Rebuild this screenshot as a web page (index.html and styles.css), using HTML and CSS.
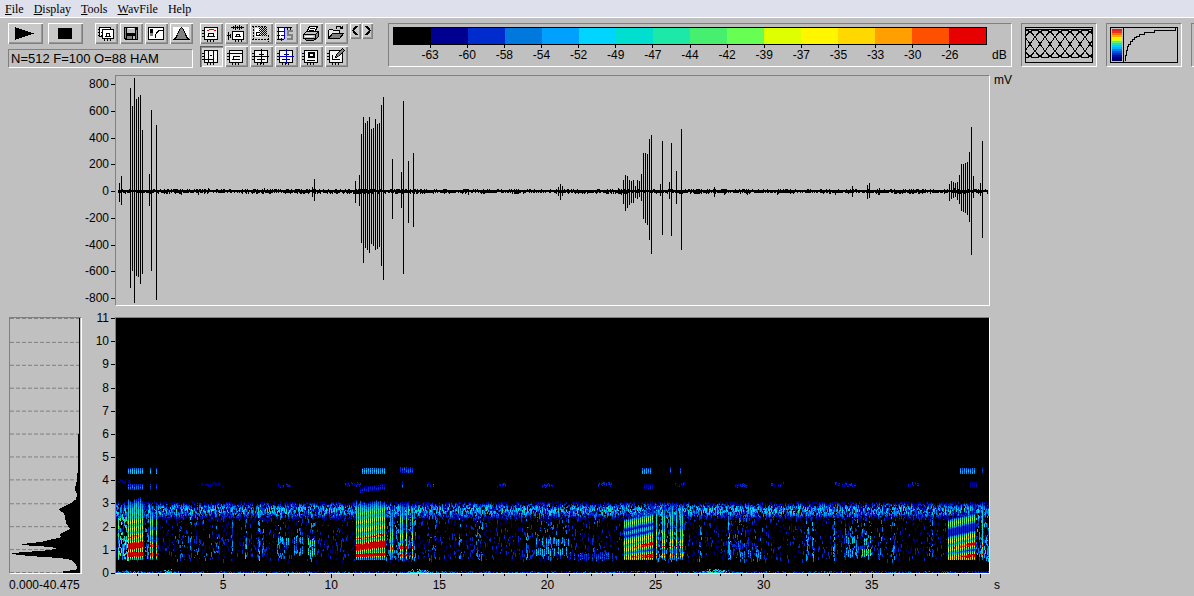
FILE: index.html
```html
<!DOCTYPE html>
<html lang="en">
<head>
<meta charset="utf-8">
<title>Spectrogram</title>
<link rel="stylesheet" href="styles.css">
</head>
<body>
<svg class="defs" aria-hidden="true">
  <defs>
    <symbol id="frame" viewBox="0 0 23 21">
      <path fill="#f4f4f4" d="M4 4h14v13H4z"/>
      <path fill="none" stroke="#000" d="M4.500 4.500h13v12h-13zM2 7.500h2M2 10.500h2M2 13.500h2M7.500 17v2M10.500 17v2M13.500 17v2"/>
    </symbol>
    <pattern id="check" width="2" height="2" patternUnits="userSpaceOnUse">
      <path d="M0 0h1v1H0zM1 1h1v1H1z"/>
    </pattern>
  </defs>
</svg>

<nav class="menu" aria-label="Main menu">
  <button type="button"><u>F</u>ile</button>
  <button type="button"><u>D</u>isplay</button>
  <button type="button"><u>T</u>ools</button>
  <button type="button"><u>W</u>avFile</button>
  <button type="button">Help</button>
</nav>

<header class="toolbar">
  <div class="transport">
    <div class="row">
      <button class="btn wide" type="button" aria-label="Play"><svg viewBox="0 0 35 21"><path d="M7 4l19 6.500L7 17z"/></svg></button>
      <button class="btn wide" type="button" aria-label="Stop"><svg viewBox="0 0 35 21"><path d="M10 5h14v11H10z"/></svg></button>
      <div class="row tight">
        <button class="btn" type="button" aria-label="Copy"><svg viewBox="0 0 23 21"><path fill="#fff" stroke="#000" d="M4.500 4.500h11v9h-11z"/><path stroke="#000" d="M3 6.500h2M3 9.500h2M3 12.500h2"/><path fill="#fff" stroke="#000" d="M7.500 6.500h11v9h-11z"/><path fill="none" stroke="#000" d="M10 13.500h6M11.500 13v-3h3v3M9.500 16v2M12.500 16v2M15.500 16v2M6 9.500h2M6 12.500h2"/></svg></button>
        <button class="btn" type="button" aria-label="Save"><svg viewBox="0 0 23 21"><path d="M4 4h14v13H5l-1-1z"/><path fill="#c0c0c0" d="M7 5h8v5H7zM13 13h2v3h-2z"/><path fill="#808080" d="M5 5h1v10H5zM16 7h1v9h-1zM7 13h5v3H7z"/><path fill="#fff" d="M8 5h6v1H8z"/></svg></button>
        <button class="btn" type="button" aria-label="Transfer curve"><svg viewBox="0 0 23 21"><path fill="#fff" stroke="#000" d="M3.500 4.500h15v12h-15z"/><path d="M5 6h3v4H5z"/><path fill="#808080" d="M5 10h3v3H5z"/><path fill="none" stroke="#000" d="M10.500 15v-3l1-2 2-2 4-1"/></svg></button>
        <button class="btn" type="button" aria-label="Window shape"><svg viewBox="0 0 23 21"><path fill="#fff" d="M3 4h16v13H3z"/><path fill="#808080" stroke="#000" d="M3.500 16.500l2-1 2-4 2-5 2-2 2 2 2 5 2 4 2 1z"/></svg></button>
      </div>
    </div>
    <output class="status">N=512 F=100 O=88 HAM</output>
  </div>

  <div class="tools">
    <button class="btn" type="button" aria-label="Show marker"><svg viewBox="0 0 23 21"><use href="#frame"/><path fill="none" stroke="#e00000" d="M7 7.500h2M9 6.500h5M14 7.500h2"/><path fill="none" stroke="#000" d="M7 13.500h8M8.500 13v-3h5v3"/></svg></button>
    <button class="btn" type="button" aria-label="Envelope"><svg viewBox="0 0 23 21"><path fill="#fff" stroke="#000" d="M7.500 8.500h11v8h-11z"/><path fill="none" stroke="#000" d="M6 4.500h13M8.500 3v3M10.500 2v5M12.500 3v3M14.500 2v5M16.500 3v3M3.500 9v8M2 12.500h4M5.500 11v4M10 13.500h6M11.500 13v-2h3v2M10.500 17v2M13.500 17v2M16.500 17v2"/></svg></button>
    <button class="btn" type="button" aria-label="Select area"><svg viewBox="0 0 23 21"><path fill="#fff" d="M5 5h6v9H5z"/><path fill="none" stroke="#000" stroke-dasharray="2 1" d="M2 3.500h15M3.500 3v13M2 16.500h18M18.500 12v7"/><path fill="none" stroke="#000" d="M6 12.500h4M6.500 12v-3h3"/><path fill="url(#check)" d="M9 4h8v9H9z"/></svg></button>
    <button class="btn" type="button" aria-label="Spectrum"><svg viewBox="0 0 23 21"><path fill="#fff" d="M4 5h5v10H4z"/><path fill="none" stroke="#000" d="M2 4.500h15M3.500 4v12M2 8.500h3M2 12.500h3M2 16.500h7M6.500 15v3M12.500 4v3M15.500 4v3"/><path stroke="#0000e0" d="M9.500 4v12M5 8.500h4M6 12.500h3"/><path fill="none" stroke="#808080" stroke-width="2" d="M18 8h-5v4h4v4h-5"/></svg></button>
    <button class="btn" type="button" aria-label="Print"><svg viewBox="0 0 23 21"><path fill="#fff" stroke="#000" d="M6.500 9.500l3-6h8l-3 6z"/><path stroke="#000" d="M10 5.500h5M9 7.500h5"/><path fill="#c0c0c0" stroke="#000" d="M3.500 11.500l3-3h12l-3 3zM3.500 11.500h12v4h-12z"/><path fill="#808080" stroke="#000" d="M15.500 11.500l3-3v5l-3 3zM4.500 15.500h11l-2 2h-7z"/><path stroke="#fff" d="M5 13.500h8"/></svg></button>
    <button class="btn" type="button" aria-label="Open"><svg viewBox="0 0 23 21"><path fill="#e8e8e8" stroke="#000" d="M3.500 15.500v-8l1-1h3l1 1h6v3"/><path fill="#808080" stroke="#000" d="M3.500 15.500l4-5h11l-4 5z"/><path fill="none" stroke="#000" d="M11 5.500l1-2h3l2 2M17.500 3v3M15 5.500h3"/></svg></button>
    <button class="btn pressed" type="button" aria-label="Time cursors"><svg viewBox="0 0 23 21"><use href="#frame"/><path fill="none" stroke="#000" d="M8.500 4v13M13.500 4v13M9 13.500h4M5 13.500h3M10 9.500h2"/></svg></button>
    <button class="btn" type="button" aria-label="Frequency cursors"><svg viewBox="0 0 23 21"><use href="#frame"/><path fill="none" stroke="#000" d="M4 7.500h14M9 10.500h6M7 13.500h8M8.500 10v4"/></svg></button>
    <button class="btn" type="button" aria-label="Crosshair"><svg viewBox="0 0 23 21"><use href="#frame"/><path fill="none" stroke="#000" d="M11.500 3v15M4 10.500h15M7 13.500h8M9 8.500h5"/></svg></button>
    <button class="btn" type="button" aria-label="Second crosshair"><svg viewBox="0 0 23 21"><use href="#frame"/><path stroke="#000" d="M7 13.500h8M9 8.500h5"/><path fill="none" stroke="#0000d0" d="M11.500 3v15M4 10.500h15"/></svg></button>
    <button class="btn" type="button" aria-label="Box cursor"><svg viewBox="0 0 23 21"><use href="#frame"/><path fill="#fff" stroke="#000" stroke-width="2" d="M9 7h5v4H9z"/><path stroke="#000" d="M7 14.500h8"/></svg></button>
    <button class="btn" type="button" aria-label="Draw"><svg viewBox="0 0 23 21"><use href="#frame"/><path fill="none" stroke="#000" d="M7 13.500h8M7.500 9v4"/><path fill="#808080" stroke="#000" d="M10.500 11.500l1-3 6-6 2 2-6 6z"/></svg></button>
  </div>
  <div class="scroll">
    <button class="btn small" type="button" aria-label="Scroll left"><svg viewBox="0 0 11 16"><path fill="none" stroke="#000" stroke-width="2" d="M7 3L3 7.500 7 12"/></svg></button>
    <button class="btn small" type="button" aria-label="Scroll right"><svg viewBox="0 0 11 16"><path fill="none" stroke="#000" stroke-width="2" d="M4 3l4 4.500L4 12"/></svg></button>
  </div>

  <section class="sunken scale" aria-label="Level scale">
    <div class="bar" id="bar"></div>
    <div class="levels" id="levels"></div>
    <span class="unit-db">dB</span>
  </section>
  <section class="sunken mini"><svg id="lattice" viewBox="0 0 68 36" preserveAspectRatio="none"></svg></section>
  <section class="sunken mini"><svg id="curve" viewBox="0 0 68 36" preserveAspectRatio="none"></svg></section>
  <section class="sunken cut"></section>
</header>

<main class="plots">
  <div class="axis axis-mv" id="axis-mv"></div>
  <svg class="sunken wave" id="wave" viewBox="116 76 873 229" preserveAspectRatio="none" role="img" aria-label="Waveform"></svg>
  <span class="unit-mv">mV</span>

  <svg class="sunken profile" id="profile" viewBox="10 318 71 256" preserveAspectRatio="none" role="img" aria-label="Mean spectrum"></svg>
  <div class="axis axis-khz" id="axis-khz"></div>
  <canvas class="sunken sono" id="sono" width="873" height="255"></canvas>

  <span class="range">0.000-40.475</span>
  <div class="time">
    <svg id="ticks" viewBox="0 0 873 4" preserveAspectRatio="none"></svg>
    <div class="seconds" id="seconds"></div>
  </div>
  <span class="unit-s">s</span>
</main>
<script src="app.js"></script>
</body>
</html>
```
FILE: styles.css
```css
* { box-sizing: border-box; }

body {
  margin: 0;
  min-height: 100vh;
  background: #c0c0c0;
  color: #000;
  font: 12px/15px "Liberation Sans", Arial, sans-serif;
}

button { padding: 0; border: 0; background: none; color: inherit; font: inherit; }
svg { display: block; shape-rendering: crispEdges; }
.defs { position: absolute; width: 0; height: 0; }

.menu {
  display: flex;
  gap: 10px;
  height: 18px;
  padding: 0 5px;
  background: #dee1ec;
  border-bottom: 1px solid #fff;
  font: 12px/16px "Liberation Serif", "Times New Roman", serif;
}

.toolbar { display: flex; align-items: flex-start; padding: 5px 0 0 8px; }
.transport { display: flex; flex-direction: column; gap: 5px; width: 185px; margin-right: 7px; }
.row { display: flex; gap: 5px; }
.row.tight { gap: 2px; margin-left: auto; }

.btn {
  width: 23px;
  height: 21px;
  background: #c8c8c8;
  box-shadow: inset 1px 1px #fff, inset -1px -1px #808080, inset -2px -2px #989898;
}
.btn svg { width: 100%; height: 100%; }
.btn.wide { width: 35px; }
.btn.small { width: 11px; height: 16px; }
.btn.pressed {
  background: #d4d4d4;
  box-shadow: inset 1px 1px #606060, inset 2px 2px #909090, inset -1px -1px #fff;
}

.sunken { border: 1px solid; border-color: #808080 #fff #fff #808080; }

.status {
  height: 19px;
  padding: 0 2px;
  border: 1px solid;
  border-color: #808080 #fff #fff #808080;
  font-size: 13px;
  line-height: 17px;
  white-space: nowrap;
}

.tools { display: grid; grid-template-columns: repeat(6, 23px); gap: 2px; margin-right: 2px; }
.scroll { display: flex; gap: 1px; margin-right: 15px; }

.toolbar .sunken { height: 44px; margin-right: 9px; }
.scale {
  display: grid;
  flex: 1;
  grid-template-columns: 1fr 24px;
  grid-template-rows: 18px 20px;
  padding: 3px 0 0 4px;
}
.bar { display: flex; grid-column: 1; border: 1px solid #000; }
.bar i { flex: 1; }
.levels { display: flex; grid-column: 1; justify-content: center; }
.levels span { width: 6.25%; text-align: center; }
.levels span::before { content: ""; display: block; width: 1px; height: 3px; margin: 0 auto; background: #000; }
.unit-db { padding: 3px 0 0 5px; }
.mini { flex: none; width: 76px; padding: 3px; }
.mini svg { width: 100%; height: 100%; }
.toolbar .cut { width: 3px; margin-right: 0; border-right: 0; }

.plots {
  display: grid;
  grid-template-columns: 73px 33px 1fr 204px;
  grid-template-rows: 231px 257px auto;
  row-gap: 11px;
  padding: 8px 0 0 9px;
  margin-top: -1px;
}
.axis { display: flex; flex-direction: column; justify-content: space-between; grid-column: 2; }
.axis span { display: flex; align-items: center; justify-content: flex-end; gap: 2px; white-space: nowrap; }
.axis span::after { content: ""; width: 4px; height: 1px; background: #000; }
.axis-mv { padding-top: 2px; }
.axis-khz { margin: -6px 0 -7px; }
.wave { grid-column: 3; width: 100%; height: 100%; }
.unit-mv { padding-left: 4px; margin-top: -2px; }
.profile { grid-column: 1; width: 100%; height: 100%; }
.sono { grid-column: 3; width: 100%; height: 100%; background: #000; }
.range { grid-column: 1; grid-row: 3; margin-top: -7px; }
.time { grid-column: 3; grid-row: 3; margin-top: -11px; }
.time svg { width: 100%; height: 4px; }
.seconds { display: flex; padding-left: 6.18%; }
.seconds span { flex: none; width: 13.17%; text-align: center; }
.unit-s { grid-column: 4; grid-row: 3; padding-left: 4px; margin-top: -7px; }
```
FILE: app.js
```js
const $ = (id) => document.getElementById(id);

const PALETTE = [
  [0, 0, 0], [0, 0, 144], [0, 44, 205], [0, 120, 222], [0, 160, 255], [0, 212, 255],
  [0, 222, 208], [28, 232, 168], [70, 240, 110], [104, 255, 84], [222, 255, 0],
  [255, 246, 0], [255, 216, 0], [255, 160, 0], [255, 80, 0], [230, 0, 0]
];
const LEVELS = [-63, -60, -58, -54, -52, -49, -47, -44, -42, -39, -37, -35, -33, -30, -26];

let seed = 4711;
function rnd() {
  seed = (Math.imul(seed, 1664525) + 1013904223) >>> 0;
  return seed / 4294967296;
}

function spans(id, values) {
  $(id).innerHTML = values.map((v) => `<span>${v}</span>`).join("");
}

// Level scale and axes
$("bar").innerHTML = PALETTE.map((c) => `<i style="background:rgb(${c})"></i>`).join("");
spans("levels", LEVELS);
spans("axis-mv", [800, 600, 400, 200, 0, -200, -400, -600, -800]);
spans("axis-khz", [11, 10, 9, 8, 7, 6, 5, 4, 3, 2, 1, 0]);
spans("seconds", [5, 10, 15, 20, 25, 30, 35]);

let d = "";
for (let s = 1; s <= 40; s++) {
  const x = Math.round(s * 873 / 40.475);
  d += `M${x} 0h1v${s % 5 ? 2 : 4}h-1z`;
}
$("ticks").innerHTML = `<path d="${d}"/>`;

// Window overlap preview
d = "";
for (let x0 = -60; x0 < 68; x0 += 10) {
  let line = "";
  for (let i = 0; i <= 60; i++) {
    const x = x0 + i;
    if (x < 1 || x > 67) continue;
    const y = 31 - 28 * Math.sin(Math.PI * i / 60) ** 2;
    line += (line ? "L" : "M") + x + " " + y.toFixed(1);
  }
  d += line;
}
$("lattice").innerHTML =
  `<path fill="none" stroke="#000" d="M.5.5h67v35H.5zM0 2.500h68${d}"/>`;

// Colour transfer curve
const ramp = ["#e02020", "#f03010", "#ff7000", "#ffb000", "#fff000", "#d0ff20", "#60f080",
  "#20e0c0", "#00d0ff", "#00b0ff", "#0080f0", "#0050e0", "#0030c0", "#0010a0", "#000080", "#000050"];
$("curve").innerHTML =
  ramp.map((c, i) => `<path fill="${c}" d="M2 ${2 + i * 2}h10v2H2z"/>`).join("") +
  '<path fill="none" stroke="#000" d="M.5.5h67v35H.5zM13.500 0v36M15.500 34v-6h1v-5h1v-4h1v-2h2v-3h2v-2h2v-2h2v-1h3v-2h5v-2h10v-2h21v-2"/>';

// Waveform pulses: x, top, bottom
const PULSES = [
  [119, 183, 202], [121, 176, 205], [130, 88, 288], [132, 106, 271], [134, 78, 303], [136, 99, 276],
  [138, 97, 277], [140, 95, 284], [142, 130, 274], [149, 174, 206], [151, 110, 271], [156, 125, 300],
  [312, 187, 197], [314, 179, 201], [355, 181, 203], [359, 175, 206], [361, 134, 243], [363, 117, 263],
  [365, 123, 248], [367, 121, 250], [369, 117, 253], [371, 129, 244], [373, 128, 246], [375, 119, 250],
  [377, 124, 249], [379, 123, 247], [381, 105, 266], [383, 97, 280], [392, 159, 219], [401, 172, 208],
  [403, 101, 274], [408, 161, 223], [413, 153, 227], [558, 187, 196], [560, 184, 200], [562, 186, 196],
  [623, 180, 204], [625, 175, 211], [627, 176, 208], [629, 180, 205], [631, 181, 203], [633, 180, 203],
  [635, 186, 198], [637, 180, 199], [639, 181, 197], [641, 174, 201], [643, 153, 219], [645, 153, 223],
  [647, 154, 225], [649, 139, 240], [651, 135, 254], [660, 184, 196], [662, 141, 235], [669, 182, 199],
  [671, 143, 236], [676, 171, 204], [681, 129, 250], [714, 187, 197], [852, 186, 197], [867, 185, 199],
  [869, 183, 198], [879, 188, 195], [949, 184, 201], [951, 181, 199], [953, 182, 198], [955, 183, 197],
  [957, 182, 200], [959, 175, 204], [961, 164, 211], [963, 164, 212], [965, 163, 213], [967, 162, 215],
  [969, 152, 222], [971, 127, 255], [973, 176, 198], [980, 183, 196], [982, 141, 238]
];
d = PULSES.map(([x, a, b]) => `M${x} ${a}h1v${b - a}h-1z`).join("");
let swell = 0;
for (let x = 118; x < 988; x++) {
  if (x % 7 === 0) swell = rnd();
  const up = 1 + (rnd() < swell * 0.5 ? 1 : 0) + (rnd() < 0.05 ? 1 : 0);
  const down = (rnd() < 0.4 ? 0 : 1) + (rnd() < swell * 0.5 ? 1 : 0) + (rnd() < 0.05 ? 1 : 0);
  d += `M${x} ${191 - up}h1v${1 + up + down}h-1z`;
}
$("wave").innerHTML = `<path d="${d}"/>`;

// Mean spectrum
d = "";
for (let k = 0; k < 12; k++) d += `M10 ${Math.round(573 - k * 23.15) + 0.5}h69`;
$("profile").innerHTML =
  `<path stroke="#808080" stroke-dasharray="4 2" d="${d}"/>` +
  '<path d="M79 318V434H78V470L77 478 77 482 76 484 75 490 77 495 76 500 72 503 66 506 59 510 60 512 64 514 65 518 66 524 70 530 63 533 59 536 62 538 53 540 40 543 22 545 22 546 40 547 58 549 50 551 12 554 12 555 30 557 60 559 72 561 76 565 77 569 76 571 63 572V574H80V318z"/>';

// Spectrogram
const X0 = 116, Y0 = 318, W = 873, H = 255;
const level = new Float32Array(W * H);
const dim = new Float32Array(W * H).fill(1);
function put(x, y, v, k = 1) {
  const i = (y - Y0) * W + x - X0;
  if (x < X0 || x >= X0 + W || y < Y0 || y >= Y0 + H) return;
  if (v > level[i]) { level[i] = v; dim[i] = k; }
}
const bell = (t, c, s) => Math.exp(-((t - c) ** 2) / (2 * s * s));

// Active regions of the background: from, to, density, strength
const REGIONS = [
  [118, 128, .55, .55], [145, 148, .4, .25], [175, 212, .16, .16], [190, 191, .5, .28], [214, 218, .25, .22],
  [231, 232, .45, .22], [245, 246, .5, .26], [258, 259, .7, .28], [262, 263, .5, .26], [277, 284, .25, .25],
  [294, 302, .22, .22], [308, 315, .28, .25], [386, 415, .36, .25], [428, 436, .2, .18], [459, 461, .35, .25],
  [476, 482, .3, .24], [526, 528, .4, .3], [535, 570, .22, .18], [593, 597, .3, .2], [656, 683, .4, .25],
  [699, 701, .4, .24], [728, 730, .55, .3], [735, 762, .2, .16], [806, 808, .5, .28], [812, 813, .5, .28],
  [833, 834, .45, .3], [844, 858, .3, .22], [860, 871, .24, .22], [878, 882, .3, .24], [890, 894, .35, .24],
  [929, 932, .3, .22], [975, 989, .45, .28]
];

for (let x = X0; x < X0 + W; x++) {
  let density = 0.13, strength = 0.12;
  for (const [a, b, p, s] of REGIONS) if (x >= a && x <= b) { density = p; strength = s; }
  const col = 0.75 + 0.4 * rnd();
  let y = 488 + Math.floor(rnd() * 3);
  while (y < 538) {
    const n = 1 + Math.floor(rnd() * 3), r = rnd();
    for (let j = 0; j < n; j++, y++) {
      const g = bell(y, 509.5, y < 509 ? 4.5 : 5.5);
      put(x, y, g * (0.02 + 0.42 * r ** 1.2 * col));
    }
  }
  y = 512;
  while (y < 560) {
    const n = 1 + Math.floor(rnd() * 4);
    const local = (y > 535 && y < 557 ? 1.4 : 0.9);
    const v = rnd() < density * local ? 0.06 + strength * rnd() : 0.06 * rnd();
    for (let j = 0; j < n; j++, y++) put(x, y, v, v < .13 ? .8 : 1);
  }
  put(x, 571, rnd() < .35 ? .06 + .15 * rnd() : 0);
  put(x, 572, rnd() < .6 ? .08 + .15 * rnd() : 0);
  const hum = Math.max(bell(x, 168, 5), bell(x, 420, 10), bell(x, 716, 12), bell(x, 135, 15) * .6);
  for (let j = 0; j < 5; j++) if (rnd() < hum - j * .22) put(x, 572 - j, .15 + hum * .4 * rnd());
}

// Rows of short dashes: from, to, centre, strength
const DASHES = [
  [118, 132, 481, .09], [200, 222, 484, .11], [277, 291, 485, .17], [345, 361, 484, .16], [424, 433, 484, .2],
  [497, 506, 485, .17], [541, 552, 485, .17], [598, 612, 484, .19], [675, 684, 484, .14], [734, 746, 485, .18],
  [771, 783, 484, .15], [833, 856, 484, .15], [908, 919, 484, .17], [277, 288, 540, .42], [294, 302, 540, .34],
  [308, 314, 542, .6], [308, 314, 552, .6], [294, 302, 551, .34], [536, 569, 541, .38], [536, 569, 551, .44],
  [558, 562, 551, .66], [570, 612, 556, .22], [845, 857, 539, .42], [845, 857, 552, .38], [862, 870, 540, .5],
  [862, 870, 552, .62], [738, 761, 554, .34], [735, 752, 545, .18]
];
for (const [a, b, c, s] of DASHES) {
  for (let x = a; x <= b; x++) {
    if (c > 500 && x % 2) continue;
    if (rnd() < .3) continue;
    const h = c > 500 ? 3 : 1;
    const shift = Math.floor(rnd() * 3) - 1;
    for (let y = c - h + shift; y <= c + h + shift; y++) put(x, y, s * (.45 + .55 * rnd()));
  }
}

// Call groups: pulse columns with harmonic bands
const CALLS = [
  { a: 128, b: 143, rise: 2, bands: [[515, 3, .5], [522, 3, .74], [529, 3, .76], [537, 3, .9], [546, 4, 1.3], [554, 3, 1.25]], top: 497, base: .42 },
  { a: 150, b: 157, rise: 0, bands: [[522, 4, .62], [532, 3, .74], [545, 3, 1.05], [554, 3, 1.1]], top: 502, base: .34, skip: [154] },
  { a: 356, b: 385, rise: 4, bands: [[514, 3, .6], [522, 3, .72], [530, 3, .76], [538, 2, .95], [547, 4, 1.3], [555, 2, 1.25]], top: 500, base: .44 },
  { a: 390, b: 393, rise: 0, bands: [[535, 6, .6], [548, 3, 1]], top: 503, base: .28 },
  { a: 400, b: 413, rise: 0, bands: [[520, 4, .62], [536, 4, .74], [547, 3, 1.1], [555, 2, 1.1]], top: 500, base: .34, skip: [404, 408, 410] },
  { a: 624, b: 653, rise: 6, bands: [[524, 3, .66], [533, 2, .4], [542, 3, .78], [549, 3, 1.02], [557, 3, 1.05]], top: 516, base: .16, late: true },
  { a: 656, b: 682, rise: 0, bands: [[520, 6, .5], [533, 4, .66], [541, 3, .78], [546, 2, .95], [555, 2, .95]], top: 502, base: .3, skip: [658, 660, 666, 668, 674, 678] },
  { a: 948, b: 975, rise: 6, bands: [[524, 3, .66], [541, 3, .78], [549, 3, 1.04], [557, 3, 1.05]], top: 516, base: .16, late: true },
  { a: 982, b: 983, rise: 0, bands: [[525, 6, .55], [545, 3, 1], [554, 2, 1]], top: 502, base: .4 }
];
for (const call of CALLS) {
  const width = Math.max(call.b - call.a, 1);
  for (let x = call.a; x <= call.b; x++) {
    const t = (x - call.a) / width;
    const gap = (x - call.a) % 2 === 1;
    if (call.skip && call.skip.includes(x - (gap ? 1 : 0))) continue;
    const start = call.top - (call.late ? t * 14 : 0) + rnd() * 5;
    const gain = .9 + .14 * rnd();
    for (let y = Math.round(start); y < 560; y++) {
      const edge = Math.min(1, (y - start) / 16 + .4);
      let v = call.base * edge * (y > 557 ? .7 : 1);
      for (const [c, s, p] of call.bands) {
        const power = call.late && c > 543 ? p * (.74 + .36 * t) : p;
        v = Math.max(v, power * bell(y, c - call.rise * t * (c > 552 ? .3 : 1), s));
      }
      v = Math.min(.99, v * gain * (.84 + .24 * rnd()));
      if (!gap) put(x, y, v, v > .93 ? .9 : 1);
      else if (v > .9) put(x, y, .99, .6);
      else {
        const i = (y - Y0) * W + x - X0;
        level[i] = Math.min(level[i], .18);
        if (rnd() < .4) put(x, y, Math.min(v * .4, .16), .7);
      }
    }
  }
}

// Upper harmonics
const UPPER = [[128, 142, 471, .42], [128, 142, 487, .28], [150, 156, 471, .4], [150, 156, 487, .22],
  [362, 384, 471, .42], [360, 384, 488, .17], [400, 412, 470, .24], [402, 402, 485, .24],
  [642, 650, 471, .38], [644, 652, 487, .16], [670, 670, 470, .24], [680, 680, 471, .3],
  [960, 974, 471, .38], [970, 976, 485, .14], [982, 982, 470, .24]];
for (const [a, b, c, s] of UPPER) {
  for (let x = a; x <= b; x += 2) {
    if (x === 152 || x === 154) continue;
    const lift = c > 480 && b - a > 20 ? Math.round((x - a) / 8) - 2 : 0;
    for (let y = c - 3; y <= c + 2; y++) {
      put(x, y - lift, s * (.5 + .5 * bell(y, c, 2)) * (.6 + .4 * rnd()));
    }
  }
}

const ctx = $("sono").getContext("2d");
const image = ctx.createImageData(W, H);
for (let i = 0; i < W * H; i++) {
  const c = PALETTE[Math.min(15, Math.floor(level[i] * 16))];
  for (let k = 0; k < 3; k++) image.data[i * 4 + k] = c[k] * dim[i];
  image.data[i * 4 + 3] = 255;
}
ctx.putImageData(image, 0, 0);
```
